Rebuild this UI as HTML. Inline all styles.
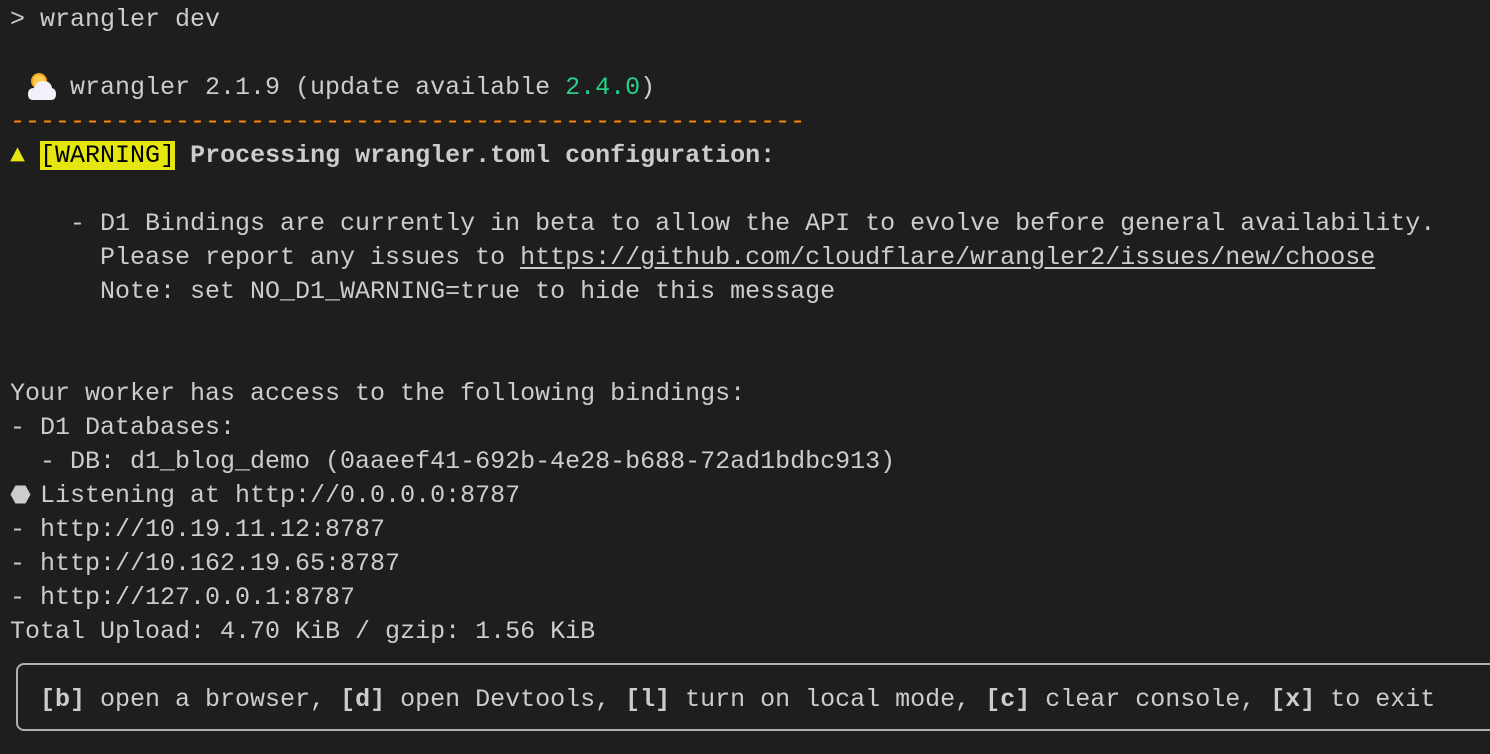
<!DOCTYPE html>
<html><head><meta charset="utf-8"><style>
html,body{margin:0;padding:0;background:#1e1e1e;width:1490px;height:754px;overflow:hidden}
.l{position:absolute;left:10px;white-space:pre;font-family:"Liberation Mono",monospace;font-size:25px;line-height:34px;height:34px;color:#cccccc;margin-top:2px}
b{font-weight:bold}
.g{color:#23d18b}.o{color:#ff8c00}
.w{background:#e5e510;color:#000}
.y{color:#e5e510}
u{text-decoration:underline;text-underline-offset:3px}
.box{position:absolute;left:16px;top:663px;width:1490px;height:68px;border:2px solid #b0b0b0;border-radius:8px;box-sizing:border-box}
</style></head><body>
<div class="l" style="top:1px">&gt; wrangler dev</div>
<svg style="position:absolute;left:27px;top:71px" width="30" height="31" viewBox="0 0 30 31"><circle cx="12" cy="10" r="8" fill="#f5a623"/><circle cx="12" cy="10" r="6" fill="#ffcc4d"/><path d="M6 29 Q1 29 1 23 Q1 17 7 17 Q9 10 16 10 Q24 10 25 17 Q29 18 29 23 Q29 29 24 29 Z" fill="#f2f0f8"/></svg>
<div class="l" style="top:69px">    wrangler 2.1.9 (update available <span class="g">2.4.0</span>)</div>
<div class="l o" style="top:103px">-----------------------------------------------------</div>
<div class="l" style="top:137px"><span class="y">▲</span> <span class="w">[WARNING]</span> <b>Processing wrangler.toml configuration:</b></div>
<div class="l" style="top:205px">    - D1 Bindings are currently in beta to allow the API to evolve before general availability.</div>
<div class="l" style="top:239px">      Please report any issues to <u>https://github.com/cloudflare/wrangler2/issues/new/choose</u></div>
<div class="l" style="top:273px">      Note: set NO_D1_WARNING=true to hide this message</div>
<div class="l" style="top:375px">Your worker has access to the following bindings:</div>
<div class="l" style="top:409px">- D1 Databases:</div>
<div class="l" style="top:443px">  - DB: d1_blog_demo (0aaeef41-692b-4e28-b688-72ad1bdbc913)</div>
<svg style="position:absolute;left:10px;top:485px" width="21" height="19" viewBox="0 0 21 19"><path d="M0.5 9.5 L5.5 0.5 H15.5 L20.5 9.5 L15.5 18.5 H5.5 Z" fill="#cccccc"/></svg>
<div class="l" style="top:477px">  Listening at http://0.0.0.0:8787</div>
<div class="l" style="top:511px">- http://10.19.11.12:8787</div>
<div class="l" style="top:545px">- http://10.162.19.65:8787</div>
<div class="l" style="top:579px">- http://127.0.0.1:8787</div>
<div class="l" style="top:613px">Total Upload: 4.70 KiB / gzip: 1.56 KiB</div>
<div class="box"></div>
<div class="l" style="top:681px;left:40px"><b>[b]</b> open a browser, <b>[d]</b> open Devtools, <b>[l]</b> turn on local mode, <b>[c]</b> clear console, <b>[x]</b> to exit</div>
</body></html>
